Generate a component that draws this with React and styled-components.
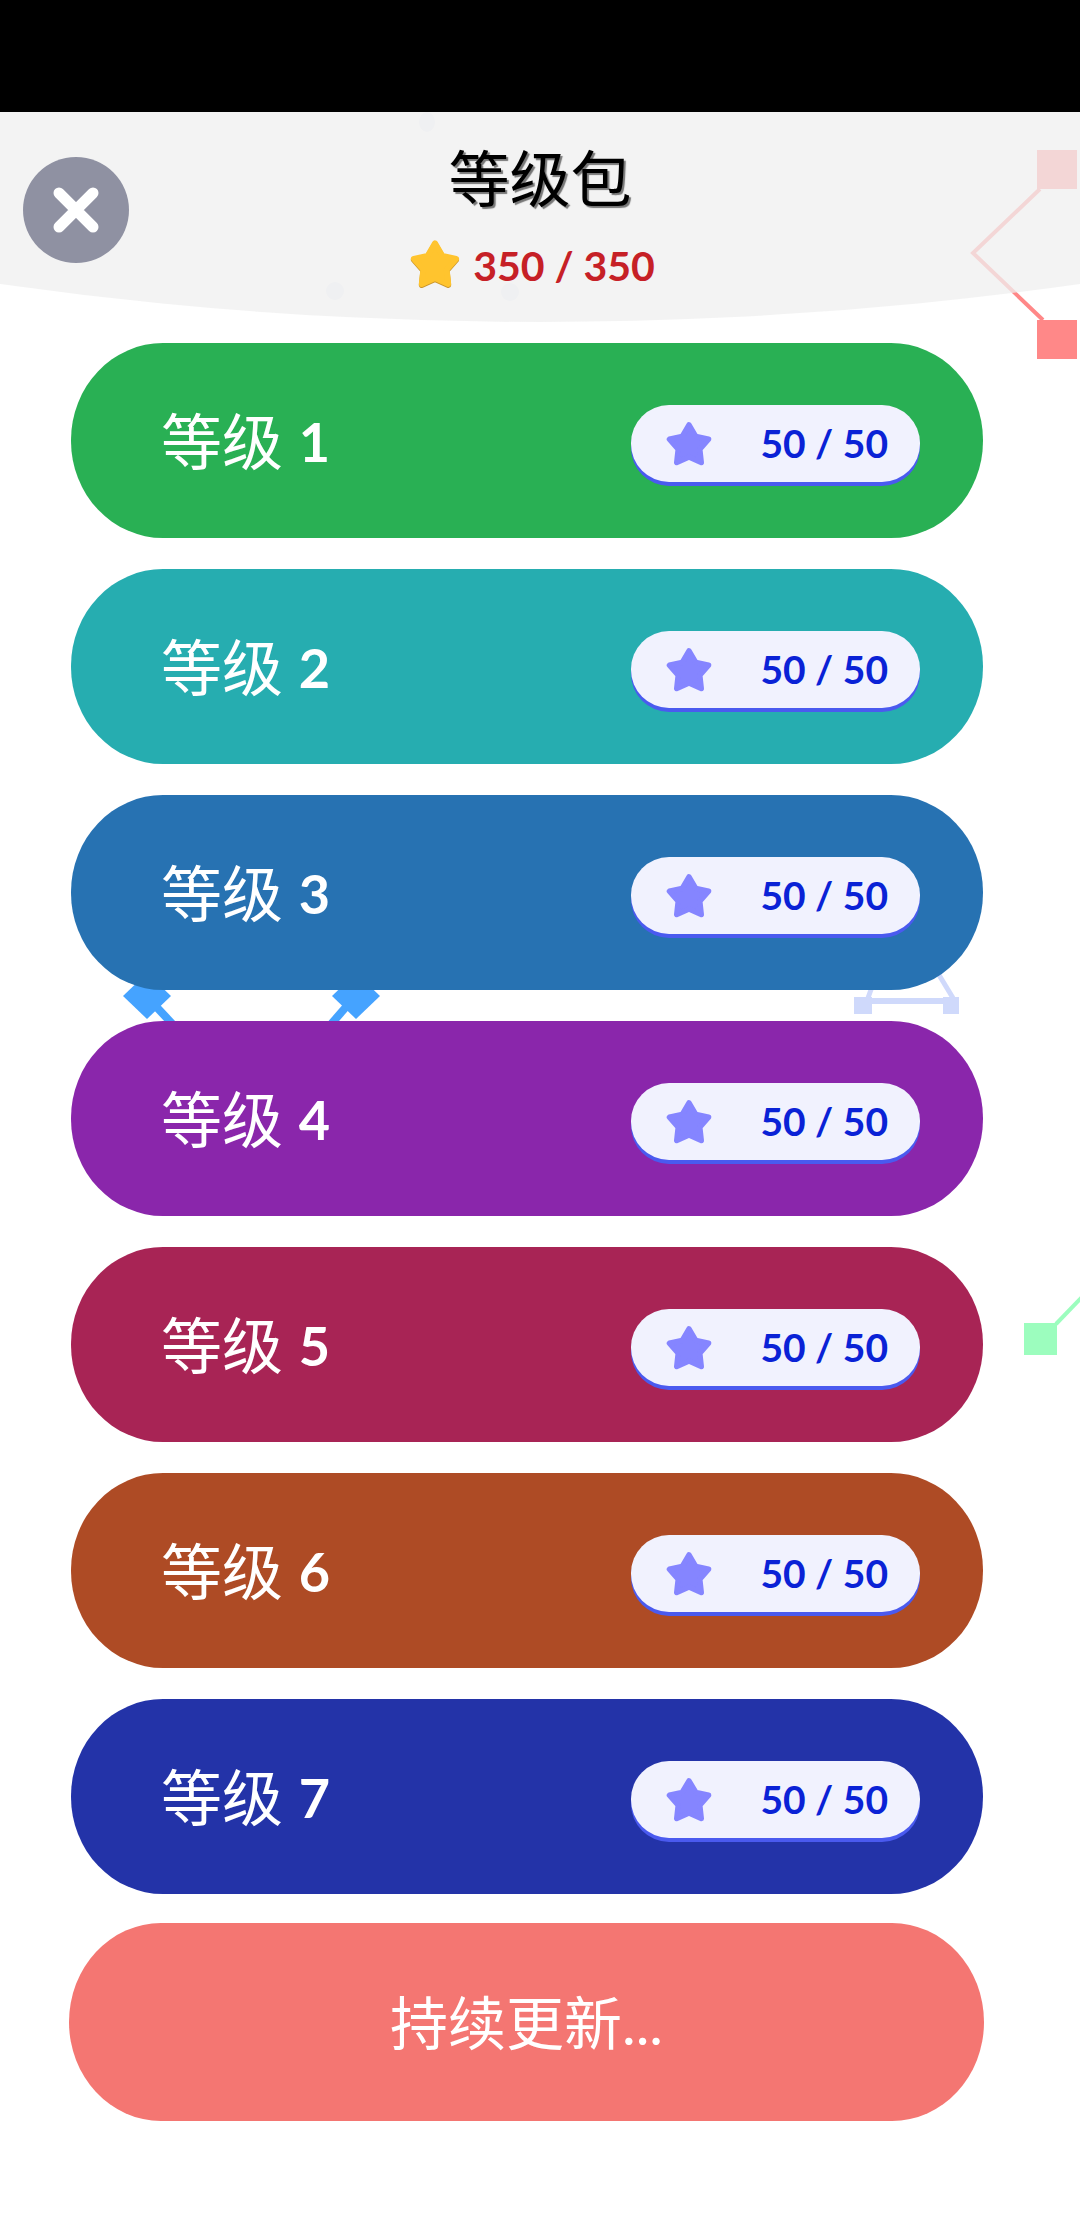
import React from 'react'
import styled, { createGlobalStyle } from 'styled-components'

const GlobalStyle = createGlobalStyle`
    html, body {
        margin: 0;
        padding: 0;
        background: #fff;
    }
    body {
        font-family: Lato, "Noto Sans CJK SC", sans-serif;
    }
`

const Page = styled.div`
    position: relative;
    width: 1080px;
    height: 2228px;
    overflow: hidden;
    background: #fff;
`

const StatusBar = styled.div`
    position: relative;
    height: 112px;
    background: #000;
`

// the diagram that sits behind the menu
const Backdrop = styled.svg`
    position: absolute;
    top: 0;
    left: 0;
    width: 1080px;
    height: 2228px;
`

const Header = styled.header`
    position: relative;
    display: grid;
    grid-template-columns: 1fr auto 1fr;
    height: 210px;
    box-sizing: border-box;
    background: rgba(239, 239, 239, 0.76);
    clip-path: circle(3856px at 50% calc(100% - 3856px));
`

const CloseButton = styled.button`
    display: flex;
    align-items: center;
    justify-content: center;
    width: 106px;
    height: 106px;
    margin: 45px 0 0 23px;
    padding: 0;
    border: 0;
    border-radius: 50%;
    background: #8f91a2;
`

const Heading = styled.div`
    display: flex;
    flex-direction: column;
    align-items: center;
    padding-top: 29px;
`

const Title = styled.h1`
    margin: 0;
    font-size: 61px;
    line-height: 76px;
    font-weight: 400;
    color: #000;
    text-shadow: 2px 2px 1px #777;
`

const Total = styled.div`
    display: flex;
    align-items: center;
    gap: 11px;
    margin: 23px 0 0 -17px;
    font-size: 41px;
    line-height: 50px;
    font-weight: 700;
    color: #c62026;
`

const GoldStar = styled.svg`
    display: block;
    width: 54px;
    height: 54px;
    margin-top: -3px;
    filter: drop-shadow(0 1px 0 #c9942a);
`

const List = styled.main`
    position: relative;
    display: flex;
    flex-direction: column;
    gap: 31px;
    padding: 21px 0 0 71px;
`

const Card = styled.div`
    display: flex;
    align-items: center;
    justify-content: space-between;
    box-sizing: border-box;
    width: 912px;
    height: 195px;
    padding: 0 63px 0 90px;
    border-radius: 92px / 97px;
    background: ${props => props.$color};
`

const Label = styled.span`
    margin-top: -4px;
    font-size: 61px;
    font-weight: 400;
    color: #fff;

    b {
        font-size: 54px;
        font-weight: 700;
        vertical-align: 3px;
    }
`

const Score = styled.div`
    display: flex;
    align-items: center;
    justify-content: space-between;
    box-sizing: border-box;
    width: 289px;
    height: 77px;
    margin-top: 6px;
    padding: 0 32px 0 33px;
    border-radius: 38px;
    background: #f1f2fe;
    box-shadow: 0 4px 0 #4a5aef;
    font-size: 39px;
    line-height: 71px;
    font-weight: 700;
    color: #0a22d6;
`

const ScoreStar = styled.svg`
    display: block;
    width: 50px;
    height: 50px;
`

const MoreCard = styled.div`
    display: flex;
    align-items: center;
    justify-content: center;
    box-sizing: border-box;
    width: 915px;
    height: 198px;
    margin: -2px 0 0 -2px;
    padding-bottom: 4px;
    border-radius: 92px / 99px;
    background: #f47672;
    font-size: 58px;
    color: #fff;
`

const levels = [
    { id: 1, color: '#29b054' },
    { id: 2, color: '#26adb0' },
    { id: 3, color: '#2772b2' },
    { id: 4, color: '#8a26ab' },
    { id: 5, color: '#a82455' },
    { id: 6, color: '#ae4b25' },
    { id: 7, color: '#2333a8' },
]

const STAR = '12,2.8 15.3,8.4 21.4,9.7 17.2,14.5 17.9,20.9 12,18.3 6.1,20.9 6.8,14.5 2.6,9.7 8.7,8.4'

const Star = ({ as: Svg, color }) => (
    <Svg viewBox="0 0 24 24">
        <polygon points={STAR} fill={color} stroke={color} strokeWidth="2.6" strokeLinejoin="round" />
    </Svg>
)

const App = () => (
    <Page>
        <GlobalStyle />
        <Backdrop viewBox="0 0 1080 2228">
            <g fill="#eef0f8">
                <ellipse cx="427" cy="122" rx="8" ry="10" />
                <ellipse cx="335" cy="291" rx="9" ry="9" />
                <ellipse cx="510" cy="292" rx="9" ry="9" />
            </g>
            <polyline points="1040,189 973,253 1043,320" fill="none" stroke="#ff8888" strokeWidth="4" />
            <rect x="1037" y="150" width="40" height="39" fill="#ff8888" />
            <rect x="1037" y="320" width="40" height="39" fill="#ff8888" />
            <g fill="none" stroke="#45a3ff" strokeWidth="8">
                <line x1="150" y1="1000" x2="178" y2="1030" />
                <line x1="352" y1="1000" x2="326" y2="1030" />
            </g>
            <polygon points="147,973 171,996 147,1019 123,996" fill="#45a3ff" />
            <polygon points="356,973 380,996 356,1019 332,996" fill="#45a3ff" />
            <g fill="#cfd9fb">
                <rect x="854" y="997" width="18" height="17" />
                <rect x="943" y="997" width="16" height="17" />
                <rect x="860" y="998" width="90" height="6" />
            </g>
            <g fill="none" stroke="#cfd9fb" strokeWidth="5">
                <line x1="868" y1="998" x2="878" y2="970" />
                <line x1="953" y1="998" x2="936" y2="970" />
            </g>
            <rect x="1024" y="1323" width="33" height="32" fill="#9cfdbe" />
            <line x1="1056" y1="1324" x2="1082" y2="1297" stroke="#9cfdbe" strokeWidth="4" />
        </Backdrop>
        <StatusBar />
        <Header>
            <div>
                <CloseButton aria-label="关闭">
                    <svg width="48" height="48" viewBox="0 0 48 48">
                        <path d="M7 7 L41 41 M41 7 L7 41" stroke="#fff" strokeWidth="11" strokeLinecap="round" />
                    </svg>
                </CloseButton>
            </div>
            <Heading>
                <Title>等级包</Title>
                <Total>
                    <Star as={GoldStar} color="#ffc42e" />
                    350 / 350
                </Total>
            </Heading>
        </Header>
        <List>
            {levels.map(level => (
                <Card key={level.id} $color={level.color}>
                    <Label>等级 <b>{level.id}</b></Label>
                    <Score>
                        <Star as={ScoreStar} color="#8585ff" />
                        50 / 50
                    </Score>
                </Card>
            ))}
            <MoreCard>持续更新...</MoreCard>
        </List>
    </Page>
)

export default App
